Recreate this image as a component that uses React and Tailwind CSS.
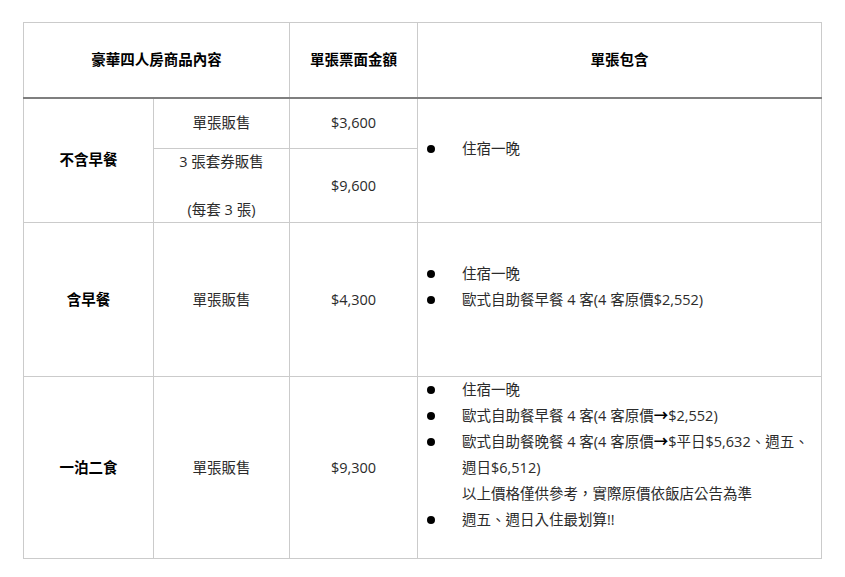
import React from 'react';

const font = { fontFamily: '"Open Sans", "Noto Sans CJK TC", sans-serif' };

const Bullet = ({ children }) => (
  <div className="flex items-center">
    <span className="w-[44px] shrink-0 flex items-center">
      <span className="block w-[8px] h-[8px] rounded-full bg-black ml-[9px]" />
    </span>
    <span className="whitespace-nowrap">{children}</span>
  </div>
);

const Arrow = () => <span className="font-bold text-black">→</span>;

const cell = 'border border-[#cbcbcb] text-center align-middle';

export default function App() {
  return (
    <div className="w-[845px] h-[577px] bg-white pt-[22px] pl-[23px]" style={font}>
      <table className="table-fixed border-collapse w-[798px] text-[14.5px] text-[#2b2b2b]">
        <colgroup>
          <col className="w-[130px]" />
          <col className="w-[136px]" />
          <col className="w-[128px]" />
          <col className="w-[404px]" />
        </colgroup>
        <thead>
          <tr className="h-[75px]">
            <th colSpan={2} className={`${cell} border-b-2 border-b-[#7f7f7f] font-bold text-black`}>
              豪華四人房商品內容
            </th>
            <th className={`${cell} border-b-2 border-b-[#7f7f7f] font-bold text-black`}>單張票面金額</th>
            <th className={`${cell} border-b-2 border-b-[#7f7f7f] font-bold text-black`}>單張包含</th>
          </tr>
        </thead>
        <tbody>
          <tr className="h-[51px]">
            <td rowSpan={2} className={`${cell} font-bold text-black`}>不含早餐</td>
            <td className={cell}>單張販售</td>
            <td className={cell}>$3,600</td>
            <td rowSpan={2} className="border border-[#cbcbcb] align-middle text-left leading-[26px] pt-[4px]">
              <Bullet>住宿一晚</Bullet>
              <div className="h-[26px]" />
            </td>
          </tr>
          <tr className="h-[74px]">
            <td className={`${cell} leading-[24px]`}>
              <div>3 張套券販售</div>
              <div className="h-[24px]" />
              <div>(每套 3 張)</div>
            </td>
            <td className={cell}>$9,600</td>
          </tr>
          <tr className="h-[154px]">
            <td className={`${cell} font-bold text-black`}>含早餐</td>
            <td className={cell}>單張販售</td>
            <td className={cell}>$4,300</td>
            <td className="border border-[#cbcbcb] align-middle text-left leading-[26px]">
              <Bullet>住宿一晚</Bullet>
              <Bullet>歐式自助餐早餐 4 客(4 客原價$2,552)</Bullet>
              <div className="h-[26px]" />
            </td>
          </tr>
          <tr className="h-[181px]">
            <td className={`${cell} font-bold text-black`}>一泊二食</td>
            <td className={cell}>單張販售</td>
            <td className={cell}>$9,300</td>
            <td className="border border-[#cbcbcb] align-top text-left leading-[26px]">
              <Bullet>住宿一晚</Bullet>
              <Bullet>
                歐式自助餐早餐 4 客(4 客原價<Arrow />$2,552)
              </Bullet>
              <Bullet>
                歐式自助餐晚餐 4 客(4 客原價<Arrow />$平日$5,632、週五、
              </Bullet>
              <div className="pl-[44px] whitespace-nowrap">週日$6,512)</div>
              <div className="pl-[44px] whitespace-nowrap">以上價格僅供參考，實際原價依飯店公告為準</div>
              <Bullet>週五、週日入住最划算!!</Bullet>
              <div className="h-[25px]" />
            </td>
          </tr>
        </tbody>
      </table>
    </div>
  );
}
